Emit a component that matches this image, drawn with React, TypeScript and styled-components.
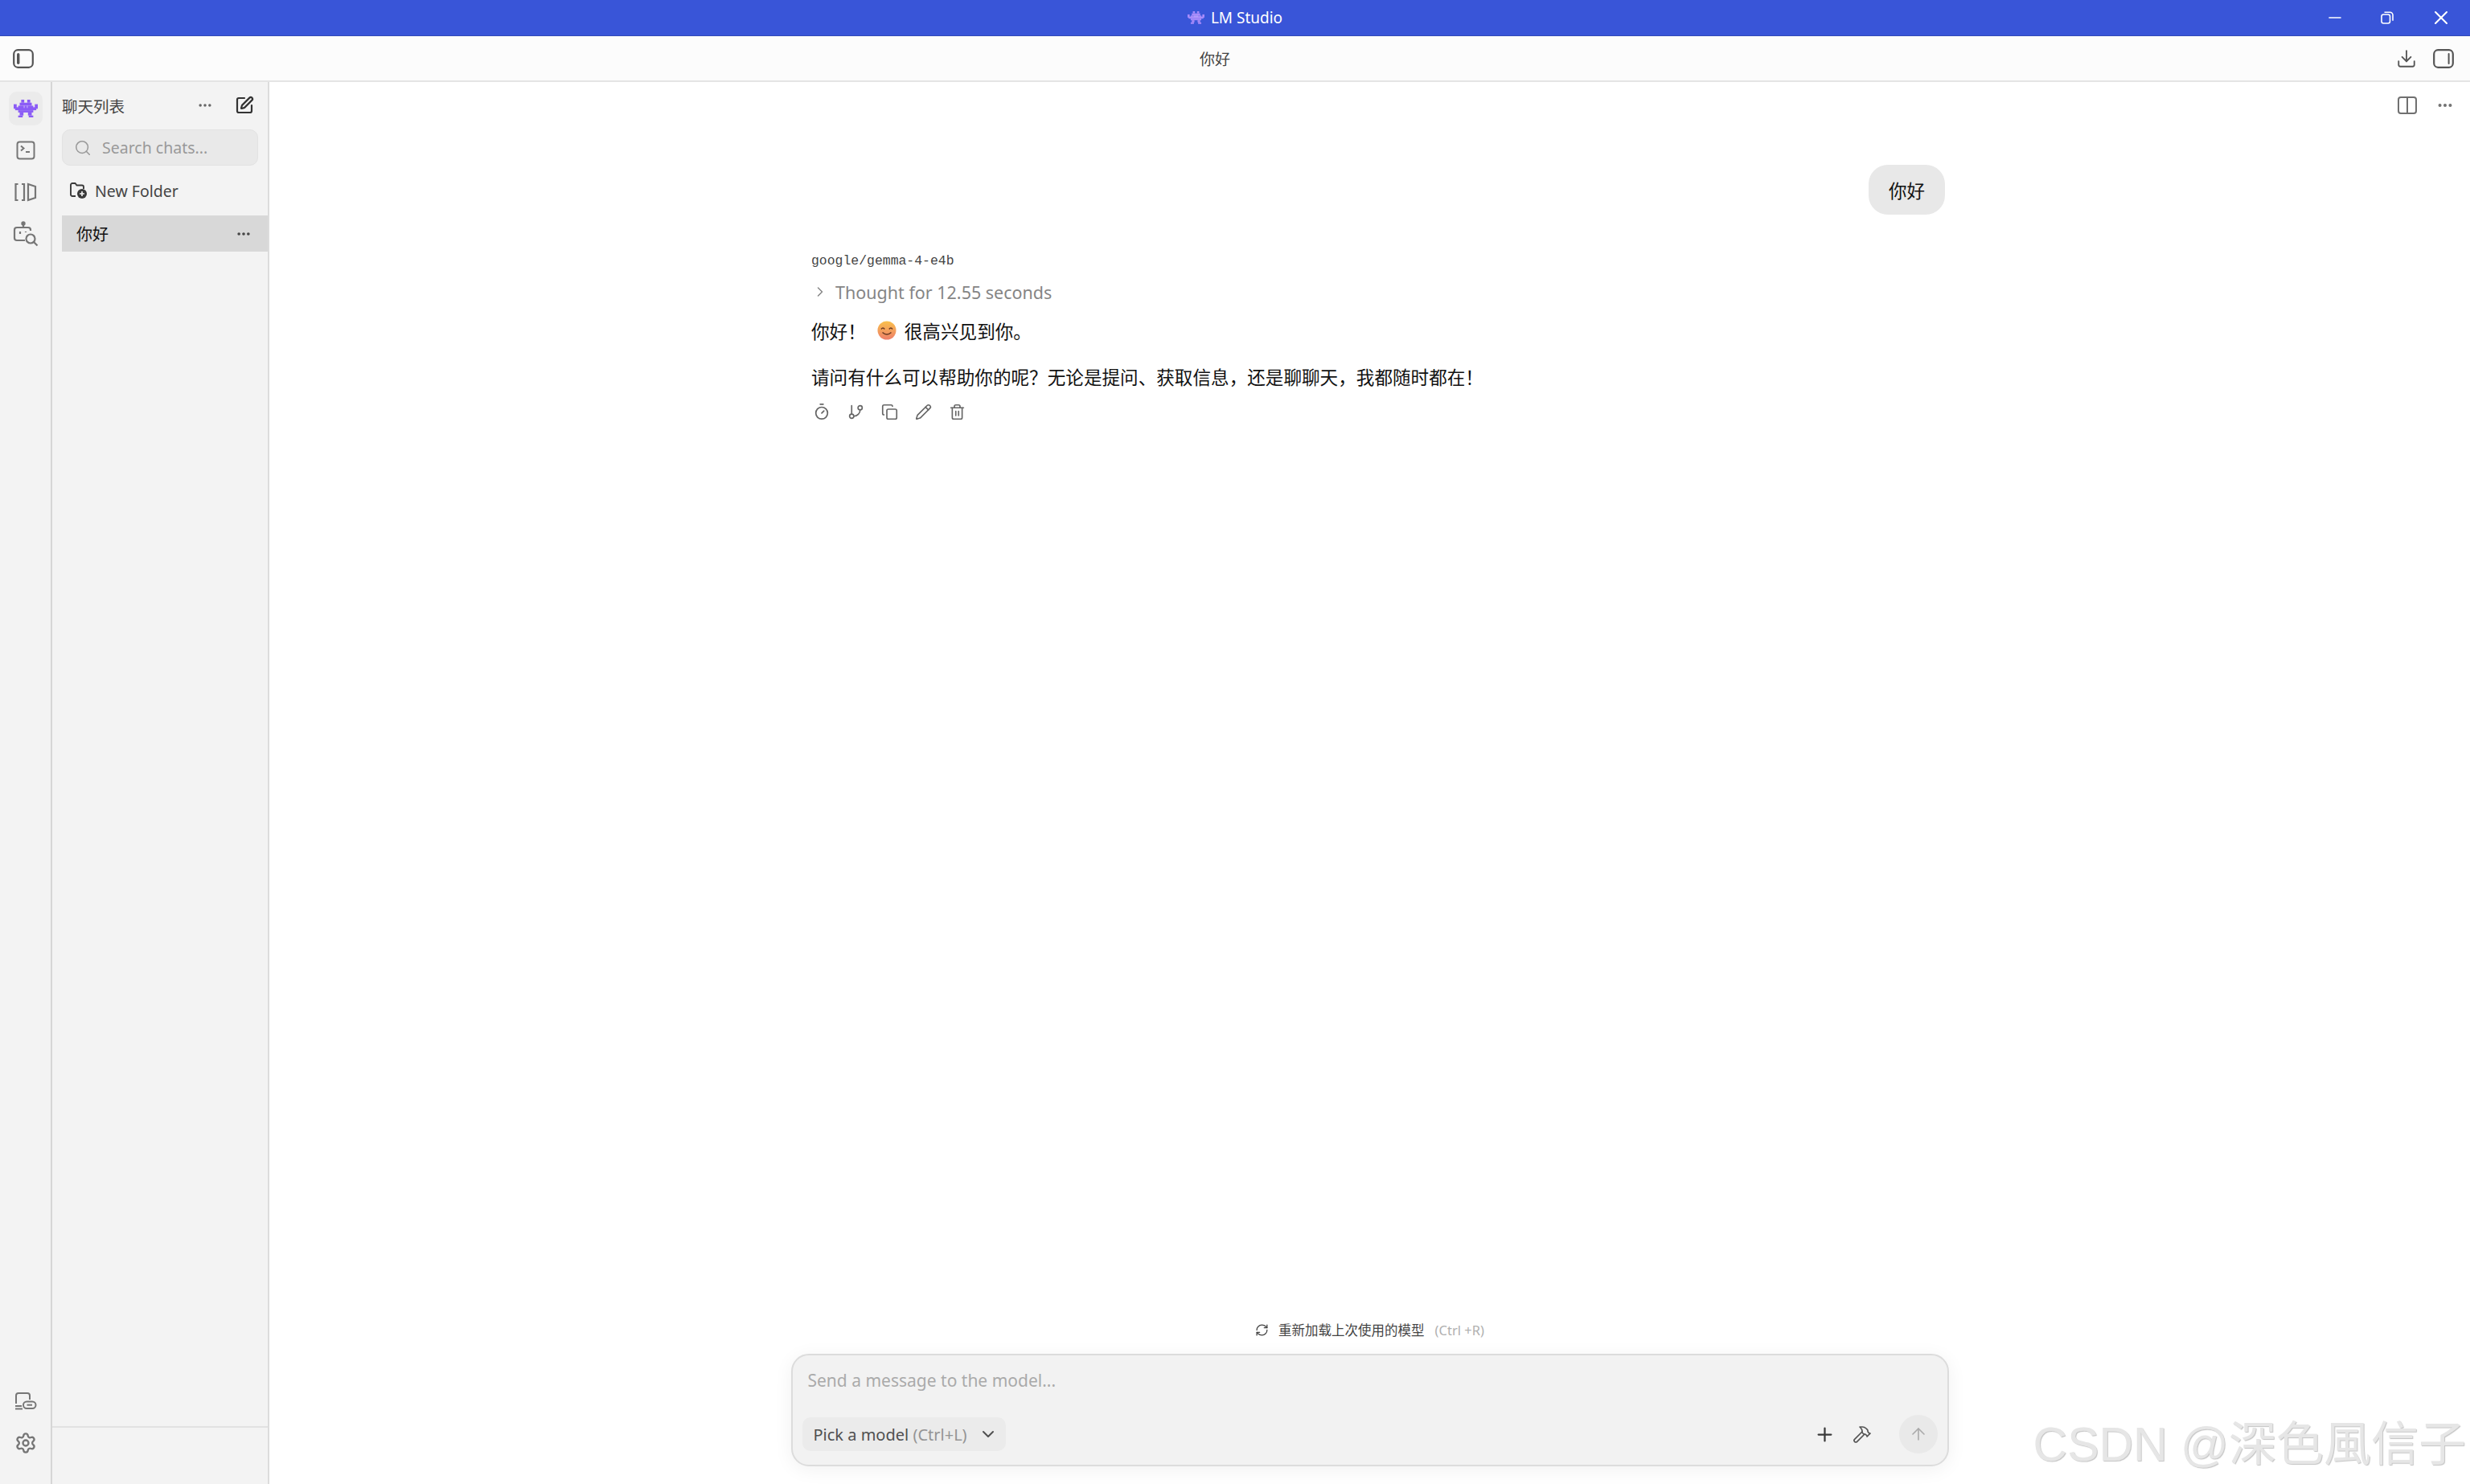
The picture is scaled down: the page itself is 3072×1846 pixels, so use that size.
import React from 'react';
import styled, { createGlobalStyle } from 'styled-components';
import {
  ArrowUp,
  ChevronDown,
  ChevronRight,
  Copy,
  Download,
  Ellipsis,
  GitBranch,
  Hammer,
  Minus,
  Pencil,
  Plus,
  RefreshCw,
  Search,
  Settings,
  SquarePen,
  Timer,
  Trash2,
  X,
} from 'lucide-react';

const sans = `"Noto Sans", "Noto Sans CJK SC", sans-serif`;

const GlobalStyle = createGlobalStyle`
  html, body {
    margin: 0;
    padding: 0;
    background: #ffffff;
  }
  #root {
    height: 1846px;
  }
  * {
    box-sizing: border-box;
  }
`;

const Page = styled.div`
  position: relative;
  width: 3072px;
  height: 1846px;
  display: flex;
  flex-direction: column;
  overflow: hidden;
  font-family: ${sans};
  color: #222;
`;

const TitleBar = styled.div`
  position: relative;
  height: 45px;
  flex: none;
  background: #3955d8;
  display: flex;
  align-items: center;
  justify-content: center;
  gap: 8px;
  color: #fff;
  font-size: 19px;
  border-bottom: 1px solid #3249b8;
`;

const WindowButtons = styled.div`
  position: absolute;
  right: 22px;
  top: 8px;
  display: flex;
  align-items: center;
  gap: 45px;
  color: #fff;
`;

const HeaderBar = styled.div`
  height: 57px;
  flex: none;
  background: #fcfcfc;
  border-bottom: 2px solid #e4e4e4;
  display: flex;
  align-items: center;
  justify-content: space-between;
  padding: 0 20px 0 16px;
  color: #555;
`;

const HeaderTitle = styled.div`
  font-size: 19px;
  color: #444;
`;

const HeaderActions = styled.div`
  display: flex;
  align-items: center;
  gap: 20px;
`;

const Body = styled.div`
  flex: 1;
  display: flex;
  min-height: 0;
`;

const Rail = styled.nav`
  width: 65px;
  flex: none;
  background: #f3f3f3;
  border-right: 2px solid #d6d6d6;
  display: flex;
  flex-direction: column;
  align-items: center;
  padding: 12px 0 20px 0;
  color: #767676;
`;

const RailItem = styled.div<{ $active?: boolean }>`
  width: 42px;
  height: 42px;
  border-radius: 10px;
  display: flex;
  align-items: center;
  justify-content: center;
  margin-bottom: 10px;
  background: ${p => (p.$active ? '#ebebeb' : 'transparent')};
`;

const RailSpacer = styled.div`
  flex: 1;
`;

const Sidebar = styled.aside`
  width: 270px;
  flex: none;
  background: #f3f3f3;
  border-right: 2px solid #dcdcdc;
  display: flex;
  flex-direction: column;
`;

const SidebarHead = styled.div`
  height: 58px;
  display: flex;
  align-items: center;
  padding: 0 17px 0 12px;
  font-size: 19.5px;
  color: #444;
`;

const SidebarTitle = styled.div`
  flex: 1;
`;

const SidebarTools = styled.div`
  display: flex;
  align-items: center;
  gap: 27px;
  color: #333;
`;

const SearchBox = styled.div`
  height: 45px;
  margin: 1px 12px 0 12px;
  background: #e9e9e9;
  border: 1px solid #e2e2e2;
  border-radius: 10px;
  display: flex;
  align-items: center;
  gap: 13px;
  padding-left: 14px;
  color: #999;
  font-size: 19.5px;
`;

const FolderRow = styled.div`
  height: 62px;
  display: flex;
  align-items: center;
  gap: 9px;
  padding-left: 22px;
  font-size: 19.5px;
  color: #444;
`;

const ChatRow = styled.div`
  height: 45px;
  margin-left: 12px;
  background: #d8d8d8;
  display: flex;
  align-items: center;
  justify-content: space-between;
  padding: 0 20px 0 18px;
  font-size: 20px;
  color: #111;
`;

const SidebarSpacer = styled.div`
  flex: 1;
`;

const SidebarFoot = styled.div`
  height: 72px;
  flex: none;
  border-top: 2px solid #e2e2e2;
`;

const Main = styled.main`
  flex: 1;
  min-width: 0;
  background: #fff;
  display: flex;
  flex-direction: column;
`;

const MainTools = styled.div`
  height: 53px;
  flex: none;
  display: flex;
  align-items: center;
  justify-content: flex-end;
  gap: 24px;
  padding: 5px 20px 0 0;
  color: #707070;
`;

const Thread = styled.div`
  flex: 1;
  min-height: 0;
  padding: 50px 653px 0 674px;
`;

const UserBubbleRow = styled.div`
  display: flex;
  justify-content: flex-end;
`;

const UserBubble = styled.div`
  height: 62px;
  padding: 0 25px;
  border-radius: 24px;
  background: #e8e8e8;
  display: flex;
  align-items: center;
  font-size: 22.5px;
  color: #111;
`;

const ModelName = styled.div`
  margin-top: 47px;
  height: 22px;
  line-height: 22px;
  font-family: "Liberation Mono", monospace;
  font-size: 16.45px;
  color: #444;
`;

const Thought = styled.div`
  margin-top: 12px;
  height: 30px;
  display: flex;
  align-items: center;
  gap: 9px;
  padding-left: 1px;
  font-size: 21.5px;
  color: #858585;
`;

const Paragraph = styled.div`
  margin-top: 16px;
  height: 34px;
  display: flex;
  align-items: center;
  font-size: 22.6px;
  color: #111;
`;

const SecondParagraph = styled(Paragraph)`
  margin-top: 23px;
`;

const Emoji = styled.svg`
  margin: 0 10px 0 14px;
  flex: none;
`;

const MessageActions = styled.div`
  margin-top: 16px;
  display: flex;
  align-items: center;
  gap: 21px;
  padding-left: 2px;
  color: #666;
`;

const ReloadLine = styled.div`
  flex: none;
  height: 28px;
  display: flex;
  align-items: center;
  justify-content: center;
  gap: 12px;
  font-size: 16.5px;
  color: #444;
  padding-right: 0;
`;

const ReloadKey = styled.span`
  color: #b0b0b0;
  margin-left: 1px;
`;

const Composer = styled.div`
  flex: none;
  width: 1440px;
  height: 140px;
  margin: 16px auto 22px auto;
  background: #f2f2f2;
  border: 2px solid #dcdcdc;
  border-radius: 22px;
  box-shadow: 0 4px 24px rgba(0, 0, 0, 0.06);
  display: flex;
  flex-direction: column;
  justify-content: space-between;
  padding: 16px 12px 14px 12px;
`;

const Placeholder = styled.div`
  font-size: 21px;
  line-height: 30px;
  color: #aaa;
  padding-left: 7px;
`;

const ComposerRow = styled.div`
  display: flex;
  align-items: center;
  justify-content: space-between;
`;

const ModelPicker = styled.div`
  width: 253px;
  height: 42px;
  border-radius: 10px;
  background: #ebebeb;
  display: flex;
  align-items: center;
  justify-content: space-between;
  padding: 0 10px 0 14px;
  font-size: 20px;
  color: #505050;
`;

const PickerHint = styled.span`
  color: #949494;
`;

const ComposerTools = styled.div`
  display: flex;
  align-items: center;
  color: #3a3a3a;
`;

const HammerSlot = styled.div`
  margin: 0 34px 0 21px;
  display: flex;
  color: #555;
`;

const SendButton = styled.div`
  width: 48px;
  height: 48px;
  border-radius: 50%;
  background: #e9e9e9;
  display: flex;
  align-items: center;
  justify-content: center;
  color: #aaa;
`;

// the watermark lies over the page, it is not part of the app
const Watermark = styled.div`
  position: absolute;
  right: 5px;
  bottom: 14px;
  font-family: "Liberation Sans", "Noto Sans CJK TC", sans-serif;
  font-size: 59px;
  line-height: 70px;
  white-space: nowrap;
  color: #e6e6e6;
  text-shadow: 1px 1px 1px #c4c4c4;
`;

const Invader: React.FC<{ size: number; color: string }> = ({ size, color }) => (
  <svg width={size} height={size * 0.75} viewBox="0 0 16 12" fill={color}>
    <rect x="5" y="0" width="2" height="2" />
    <rect x="9" y="0" width="2" height="2" />
    <rect x="4" y="2" width="8" height="2" />
    <rect x="3" y="4" width="10" height="2" />
    <rect x="0" y="3" width="2" height="3" />
    <rect x="14" y="3" width="2" height="3" />
    <rect x="1" y="5" width="14" height="2" />
    <rect x="3" y="7" width="10" height="1.5" />
    <rect x="4" y="8.5" width="2.5" height="2" />
    <rect x="9.5" y="8.5" width="2.5" height="2" />
    <rect x="3" y="10.5" width="3" height="1.5" />
    <rect x="10" y="10.5" width="3" height="1.5" />
    <rect x="6.5" y="4" width="1" height="1.5" fill="#f0ebff" opacity="0.35" />
    <rect x="8.5" y="4" width="1" height="1.5" fill="#f0ebff" opacity="0.35" />
  </svg>
);

const PanelIcon: React.FC<{ side: 'left' | 'right' }> = ({ side }) => (
  <svg width="26" height="24" viewBox="0 0 26 24" fill="none" stroke="currentColor">
    <rect x="1.2" y="1.2" width="23.6" height="21.6" rx="5" strokeWidth="2.2" />
    {side === 'left' ? (
      <rect x="5" y="5" width="3.4" height="14" rx="1.7" fill="currentColor" stroke="none" />
    ) : (
      <rect x="18.6" y="5" width="2" height="14" rx="1" fill="currentColor" stroke="none" />
    )}
  </svg>
);

const RestoreIcon = () => (
  <svg width="16" height="16" viewBox="0 0 16 16" fill="none" stroke="currentColor" strokeWidth="1.6">
    <rect x="1" y="4" width="10.5" height="11" rx="2.5" />
    <path d="M4.5 1.2h7a3.5 3.5 0 0 1 3.5 3.5v7" />
  </svg>
);

const TerminalIcon = () => (
  <svg width="24" height="24" viewBox="0 0 24 24" fill="none" stroke="currentColor" strokeWidth="2">
    <rect x="1.5" y="1.5" width="21" height="21" rx="3" />
    <path d="M6 6.5l3.5 3-3.5 3M12 14h5" />
  </svg>
);

const LibraryIcon = () => (
  <svg width="28" height="24" viewBox="0 0 28 24" fill="none" stroke="currentColor" strokeWidth="2.2">
    <path d="M4.5 2H1.5v20h3M1.5 2v20" />
    <path d="M9 2H12v20H9" />
    <path d="M17 2l9 3v14l-9 3z" />
  </svg>
);

const BotSearchIcon = () => (
  <svg width="32" height="32" viewBox="0 0 32 32" fill="none" stroke="currentColor" strokeWidth="2.2">
    <circle cx="13" cy="3" r="1.6" fill="currentColor" />
    <path d="M13 4.5V8" />
    <path d="M15 24H5a3 3 0 0 1-3-3V11a3 3 0 0 1 3-3h14a3 3 0 0 1 3 3v1" />
    <path d="M9 13v3M16 13v1" />
    <circle cx="22" cy="22" r="5.5" />
    <path d="M26 26l4.5 4.5" />
  </svg>
);

const LinkedScreenIcon = () => (
  <svg width="28" height="22" viewBox="0 0 28 22" fill="none" stroke="currentColor" strokeWidth="2">
    <path d="M2 14V4a3 3 0 0 1 3-3h11a3 3 0 0 1 3 3v5" />
    <path d="M2 16v1h7M1 20.5h9" />
    <rect x="11" y="11.5" width="15.5" height="8.5" rx="4.2" />
    <path d="M15.5 15.7h6.5" />
  </svg>
);

const FolderPlusIcon = () => (
  <svg width="22" height="20" viewBox="0 0 22 20" fill="none">
    <path
      d="M7 17H3a2 2 0 0 1-2-2V3a2 2 0 0 1 2-2h3.5l2 2.5H15a2 2 0 0 1 2 2V8"
      stroke="#3a3a3a"
      strokeWidth="1.9"
    />
    <circle cx="15" cy="14" r="6" fill="#3a3a3a" />
    <path d="M15 11v6M12 14h6" stroke="#f3f3f3" strokeWidth="1.7" />
  </svg>
);

const App: React.FC = () => (
  <Page>
    <GlobalStyle />
    <TitleBar>
      <Invader size={21} color="#a78bfa" />
      <span>LM Studio</span>
      <WindowButtons>
        <Minus size={24} strokeWidth={1.6} />
        <RestoreIcon />
        <X size={28} strokeWidth={1.8} />
      </WindowButtons>
    </TitleBar>
    <HeaderBar>
      <PanelIcon side="left" />
      <HeaderTitle>你好</HeaderTitle>
      <HeaderActions>
        <Download size={26} strokeWidth={1.7} />
        <PanelIcon side="right" />
      </HeaderActions>
    </HeaderBar>
    <Body>
      <Rail>
        <RailItem $active>
          <Invader size={30} color="#8b5cf6" />
        </RailItem>
        <RailItem>
          <TerminalIcon />
        </RailItem>
        <RailItem>
          <LibraryIcon />
        </RailItem>
        <RailItem>
          <BotSearchIcon />
        </RailItem>
        <RailSpacer />
        <RailItem>
          <LinkedScreenIcon />
        </RailItem>
        <RailItem>
          <Settings size={28} strokeWidth={2} />
        </RailItem>
      </Rail>
      <Sidebar>
        <SidebarHead>
          <SidebarTitle>聊天列表</SidebarTitle>
          <SidebarTools>
            <Ellipsis size={20} strokeWidth={2.2} color="#666" />
            <SquarePen size={24} strokeWidth={2.2} />
          </SidebarTools>
        </SidebarHead>
        <SearchBox>
          <Search size={22} strokeWidth={1.7} />
          <span>Search chats...</span>
        </SearchBox>
        <FolderRow>
          <FolderPlusIcon />
          <span>New Folder</span>
        </FolderRow>
        <ChatRow>
          <span>你好</span>
          <Ellipsis size={20} strokeWidth={2.4} color="#444" />
        </ChatRow>
        <SidebarSpacer />
        <SidebarFoot />
      </Sidebar>
      <Main>
        <MainTools>
          <svg width="24" height="22" viewBox="0 0 24 22" fill="none" stroke="currentColor" strokeWidth="2">
            <rect x="1" y="1" width="22" height="20" rx="3" />
            <path d="M12 1v20" />
          </svg>
          <Ellipsis size={22} strokeWidth={2.4} />
        </MainTools>
        <Thread>
          <UserBubbleRow>
            <UserBubble>你好</UserBubble>
          </UserBubbleRow>
          <ModelName>google/gemma-4-e4b</ModelName>
          <Thought>
            <ChevronRight size={20} strokeWidth={1.7} />
            <span>Thought for 12.55 seconds</span>
          </Thought>
          <Paragraph>
            你好！
            <Emoji width="24" height="24" viewBox="0 0 24 24">
              <defs>
                <linearGradient id="smile" x1="0" y1="0" x2="0" y2="1">
                  <stop offset="0" stopColor="#f9c04d" />
                  <stop offset="1" stopColor="#ee7f6a" />
                </linearGradient>
              </defs>
              <circle cx="12" cy="12" r="11.5" fill="url(#smile)" />
              <path d="M5 10.5q2.2-3 4.2 0M14.8 10.5q2.2-3 4.2 0" fill="none" stroke="#6b3a22" strokeWidth="1.5" />
              <path d="M6.5 14.5q5.5 5 11 0" fill="none" stroke="#6b3a22" strokeWidth="1.5" />
            </Emoji>
            很高兴见到你。
          </Paragraph>
          <SecondParagraph>请问有什么可以帮助你的呢？无论是提问、获取信息，还是聊聊天，我都随时都在！</SecondParagraph>
          <MessageActions>
            <Timer size={22} strokeWidth={1.9} />
            <GitBranch size={21} strokeWidth={1.9} />
            <Copy size={21} strokeWidth={1.9} />
            <Pencil size={21} strokeWidth={1.9} />
            <Trash2 size={21} strokeWidth={1.9} />
          </MessageActions>
        </Thread>
        <ReloadLine>
          <RefreshCw size={17} strokeWidth={1.8} />
          <span>重新加载上次使用的模型</span>
          <ReloadKey>(Ctrl +R)</ReloadKey>
        </ReloadLine>
        <Composer>
          <Placeholder>Send a message to the model...</Placeholder>
          <ComposerRow>
            <ModelPicker>
              <span>
                Pick a model <PickerHint>(Ctrl+L)</PickerHint>
              </span>
              <ChevronDown size={24} strokeWidth={2} />
            </ModelPicker>
            <ComposerTools>
              <Plus size={27} strokeWidth={2} />
              <HammerSlot>
                <Hammer size={24} strokeWidth={1.7} />
              </HammerSlot>
              <SendButton>
                <ArrowUp size={24} strokeWidth={1.6} />
              </SendButton>
            </ComposerTools>
          </ComposerRow>
        </Composer>
      </Main>
    </Body>
    <Watermark>CSDN @深色風信子</Watermark>
  </Page>
);

export default App;
